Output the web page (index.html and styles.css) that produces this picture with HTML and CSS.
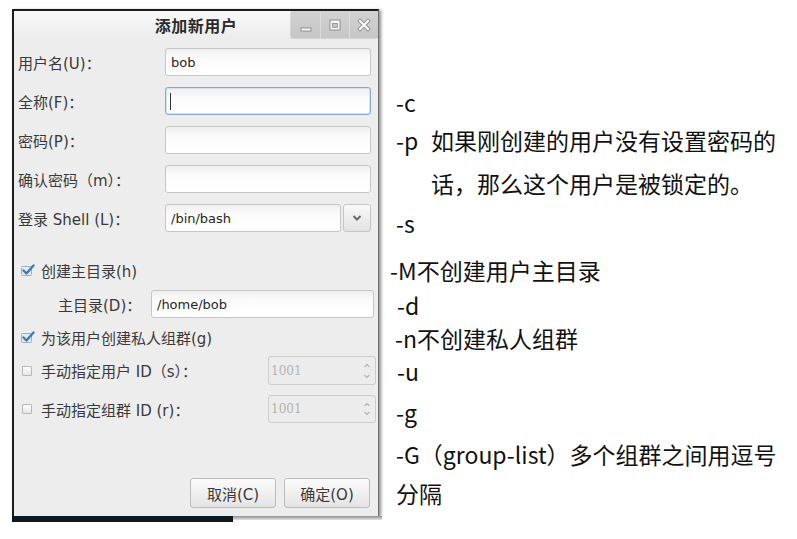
FILE: index.html
```html
<!DOCTYPE html>
<html lang="zh-CN">
<head>
<meta charset="utf-8">
<title>添加新用户</title>
<link rel="stylesheet" href="styles.css">
</head>
<body>
<div class="page">
  <div class="win-wrap">
    <div class="window">
      <div class="titlebar">
        <span class="tb-spacer"></span>
        <span class="title">添加新用户</span>
        <div class="wm-buttons">
          <span class="wm-btn">
            <svg width="16" height="16" viewBox="0 0 16 16"><rect x="3" y="11" width="10" height="3" fill="#fafafa" stroke="#8e8e8e" stroke-width="1"/></svg>
          </span>
          <span class="wm-btn">
            <svg width="16" height="16" viewBox="0 0 16 16"><rect x="3" y="3" width="10" height="10" fill="#fafafa" stroke="#8e8e8e" stroke-width="1"/><rect x="5.5" y="6.5" width="5" height="4" fill="#c4c4c4" stroke="#8e8e8e" stroke-width="0.8"/></svg>
          </span>
          <span class="wm-btn">
            <svg width="16" height="16" viewBox="0 0 16 16"><path d="M4 4 L12 12 M12 4 L4 12" stroke="#8e8e8e" stroke-width="4" stroke-linecap="square"/><path d="M4 4 L12 12 M12 4 L4 12" stroke="#fafafa" stroke-width="2.2" stroke-linecap="square"/></svg>
          </span>
        </div>
      </div>

      <div class="body">
        <div class="form">
          <span class="lbl">用户名(U)：</span>
          <div class="entry">bob</div>

          <span class="lbl">全称(F)：</span>
          <div class="entry focused"><span class="caret"></span></div>

          <span class="lbl">密码(P)：</span>
          <div class="entry"></div>

          <span class="lbl">确认密码（m）：</span>
          <div class="entry"></div>

          <span class="lbl">登录 Shell (L)：</span>
          <div class="combo">
            <div class="entry">/bin/bash</div>
            <span class="drop">
              <svg width="12" height="8" viewBox="0 0 12 8"><path d="M2.5 2 L6 5.5 L9.5 2" stroke="#6a6a6a" stroke-width="2" fill="none"/></svg>
            </span>
          </div>
        </div>

        <div class="check-row first-check">
          <svg class="cb" width="16" height="14" viewBox="0 0 16 14"><rect x="1.5" y="3.5" width="10" height="9" rx="1" fill="#e4ebf3" stroke="#9fb0c4"/><path d="M3.5 7.5 L6.5 10.5 L13.5 2.5" stroke="#3f78bd" stroke-width="2.4" fill="none" stroke-linecap="round" stroke-linejoin="round"/></svg>
          <span>创建主目录(h)</span>
        </div>

        <div class="home-row">
          <span class="home-lbl">主目录(D)：</span>
          <div class="entry home-entry">/home/bob</div>
        </div>

        <div class="check-row second-check">
          <svg class="cb" width="16" height="14" viewBox="0 0 16 14"><rect x="1.5" y="3.5" width="10" height="9" rx="1" fill="#e4ebf3" stroke="#9fb0c4"/><path d="M3.5 7.5 L6.5 10.5 L13.5 2.5" stroke="#3f78bd" stroke-width="2.4" fill="none" stroke-linecap="round" stroke-linejoin="round"/></svg>
          <span>为该用户创建私人组群(g)</span>
        </div>

        <div class="spin-row first-spin">
          <span class="box"></span>
          <span class="spin-lbl">手动指定用户 ID（s）：</span>
          <div class="spin">
            <span class="spin-val">1001</span>
            <span class="arrows">
              <svg width="8" height="20" viewBox="0 0 8 20"><path d="M1.5 6 L4 3.5 L6.5 6" stroke="#b4b4b4" stroke-width="1.2" fill="none"/><path d="M1.5 14 L4 16.5 L6.5 14" stroke="#b4b4b4" stroke-width="1.2" fill="none"/></svg>
            </span>
          </div>
        </div>

        <div class="spin-row second-spin">
          <span class="box"></span>
          <span class="spin-lbl">手动指定组群 ID (r)：</span>
          <div class="spin">
            <span class="spin-val">1001</span>
            <span class="arrows">
              <svg width="8" height="20" viewBox="0 0 8 20"><path d="M1.5 7 L4 4.5 L6.5 7" stroke="#b4b4b4" stroke-width="1.2" fill="none"/><path d="M1.5 13 L4 15.5 L6.5 13" stroke="#b4b4b4" stroke-width="1.2" fill="none"/></svg>
            </span>
          </div>
        </div>

        <div class="btn-row">
          <span class="btn">取消(C)</span>
          <span class="btn">确定(O)</span>
        </div>
      </div>
    </div>
    <div class="under">
      <span class="dark-strip"></span>
      <span class="shadow-strip"></span>
    </div>
  </div>

  <div class="notes">
    <div class="ln">-c</div>
    <div class="ln-p"><span class="opt">-p</span><span class="desc">如果刚创建的用户没有设置密码的<br>话，那么这个用户是被锁定的。</span></div>
    <div class="ln mt2">-s</div>
    <div class="ln mt14 out6">-M不创建用户主目录</div>
    <div class="ln mt2 in1">-d</div>
    <div class="ln out1">-n不创建私人组群</div>
    <div class="ln in1">-u</div>
    <div class="ln mt8">-g</div>
    <div class="ln mt9">-G（group-list）多个组群之间用逗号</div>
    <div class="ln mt6">分隔</div>
  </div>
</div>
</body>
</html>
```

FILE: styles.css
```css
* { box-sizing: border-box; }
html, body { margin: 0; padding: 0; background: #fff; }
body {
  width: 797px;
  height: 539px;
  overflow: hidden;
  font-family: "DejaVu Sans", "Noto Sans CJK SC", sans-serif;
}

.page { display: flex; align-items: flex-start; }

/* ---------- dialog window ---------- */
.win-wrap { margin: 9px 0 0 12px; width: 370px; }
.window {
  width: 367px;
  height: 507px;
  background: #ededed;
  border-top: 2px solid #1c1c1c;
  border-left: 2px solid #1c1c1c;
  border-right: 1px solid #6e6e6e;
  display: flex;
  flex-direction: column;
  box-shadow: 2px 1px 3px rgba(0,0,0,0.45);
}
.titlebar {
  height: 27px;
  display: grid;
  grid-template-columns: 1fr auto 1fr;
  align-items: center;
  background: linear-gradient(#f8f8f8, #ededed);
}
.title {
  font-family: "Noto Sans CJK SC", sans-serif;
  font-weight: 700;
  font-size: 16px;
  color: #2a2a2a;
  letter-spacing: 0.5px;
}
.wm-buttons {
  justify-self: end;
  align-self: start;
  display: flex;
  height: 27px;
  background: linear-gradient(#d2d2d2, #c6c6c6);
  border-bottom-left-radius: 3px;
  box-shadow: -1px 1px 1px rgba(0,0,0,0.12);
}
.wm-btn {
  width: 29px;
  height: 27px;
  display: flex;
  align-items: center;
  justify-content: center;
  border-left: 1px solid #dcdcdc;
}
.wm-btn:first-child { border-left: none; }

.body {
  flex: 1;
  display: flex;
  flex-direction: column;
  padding: 10px 2px 9px 4px;
  font-size: 15px;
  color: #3a3a3a;
}

.form {
  display: grid;
  grid-template-columns: 147px 206px;
  grid-auto-rows: 28px;
  row-gap: 11px;
  align-items: center;
}
.lbl { font-size: 15px; color: #3a3a3a; white-space: nowrap; }

.entry {
  height: 28px;
  border: 1px solid #c6c6c6;
  border-radius: 3px;
  background: linear-gradient(#efefef, #fbfbfb 35%, #ffffff);
  padding-left: 5px;
  display: flex;
  align-items: center;
  font-size: 13px;
  color: #262626;
}
.entry.focused {
  border-color: #86a8d2;
  box-shadow: inset 0 0 0 1px #d3e2f3;
}
.caret { width: 1px; height: 17px; background: #333; margin-left: -1px; }

.combo { display: flex; gap: 2px; }
.combo .entry { flex: 1; }
.drop {
  width: 28px;
  height: 28px;
  border: 1px solid #c6c6c6;
  border-radius: 3px;
  background: linear-gradient(#f9f9f9, #e2e2e2);
  display: flex;
  align-items: center;
  justify-content: center;
}

.check-row {
  height: 20px;
  display: flex;
  align-items: center;
  gap: 5px;
  padding-left: 2px;
  font-size: 15px;
}
.first-check { margin-top: 28px; }
.second-check { margin-top: 9px; }
.cb { flex: none; }

.home-row {
  margin-top: 10px;
  display: flex;
  align-items: center;
  padding-left: 40px;
}
.home-lbl { width: 93px; white-space: nowrap; }
.home-entry { width: 223px; }

.spin-row {
  display: flex;
  align-items: center;
  padding-left: 4px;
}
.first-spin { margin-top: 9px; height: 29px; }
.second-spin { margin-top: 10px; height: 28px; }
.box {
  width: 10px;
  height: 10px;
  border: 1px solid #b8b8b8;
  border-radius: 1px;
  background: linear-gradient(#fdfdfd, #e6e6e6);
  margin-right: 9px;
}
.spin-lbl { font-size: 15px; white-space: nowrap; }
.spin {
  margin-left: auto;
  width: 108px;
  height: 100%;
  border: 1px solid #cdcdcd;
  border-radius: 3px;
  background: #ececec;
  display: flex;
  align-items: center;
  padding: 0 4px 0 2px;
}
.spin-val { flex: 1; color: #b3b3b3; font-family: "DejaVu Serif", serif; font-size: 12px; }
.arrows { display: flex; }

.btn-row {
  margin-top: 55px;
  display: flex;
  justify-content: flex-end;
  gap: 8px;
  padding-right: 6px;
}
.btn {
  width: 86px;
  height: 30px;
  border: 1px solid #bcbcbc;
  border-radius: 3px;
  background: linear-gradient(#fbfbfb, #e4e4e4);
  display: flex;
  align-items: center;
  justify-content: center;
  font-size: 15px;
  color: #3a3a3a;
}

.under { display: flex; height: 6px; }
.dark-strip { width: 221px; height: 6px; background: #0c1923; }
.shadow-strip { flex: 1; height: 4px; background: linear-gradient(#8e8e8e, #e6e6e6); }

/* ---------- notes ---------- */
.notes {
  margin-left: 14px;
  padding-top: 86px;
  font-family: "Noto Sans CJK SC", sans-serif;
  font-size: 23px;
  color: #111;
}
.ln { line-height: 33px; height: 33px; white-space: nowrap; }
.ln-p { display: flex; line-height: 43px; }
.opt { width: 35px; flex: none; }
.desc { white-space: nowrap; }
.mt2 { margin-top: 2px; }
.mt6 { margin-top: 6px; }
.mt8 { margin-top: 8px; }
.mt9 { margin-top: 9px; }
.mt14 { margin-top: 14px; }
.out6 { margin-left: -6px; }
.out1 { margin-left: -1px; }
.in1 { margin-left: 1px; }
```
